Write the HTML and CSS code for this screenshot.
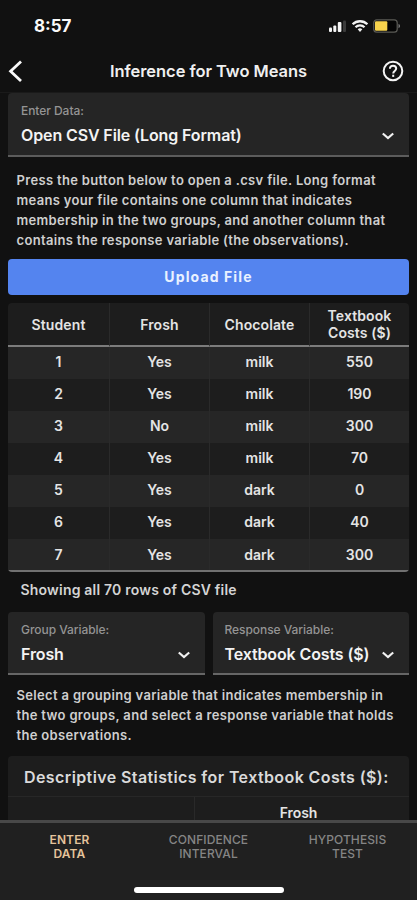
FILE: index.html
```html
<!DOCTYPE html>
<html lang="en">
<head>
<meta charset="utf-8">
<title>Inference for Two Means</title>
<link rel="stylesheet" href="styles.css">
</head>
<body>
<div class="app">
  <div class="status">
    <span class="time">8:57</span>
    <svg class="status-icons" width="74" height="18" viewBox="0 0 74 18">
      <g fill="#f4f4f4">
        <rect x="1" y="10.5" width="3" height="4.5" rx="1"/>
        <rect x="5.3" y="8.5" width="3" height="6.5" rx="1"/>
        <rect x="9.8" y="5" width="3.6" height="10" rx="1"/>
        <rect x="15" y="3.5" width="3" height="11.500" rx="1" fill="#3b3b3b"/>
      </g>
      <g fill="none" stroke="#f4f4f4" stroke-width="2.3">
        <path d="M24.600 7.300a10.500 10.500 0 0 1 14.800 0"/>
        <path d="M27.500 10.300a6.400 6.400 0 0 1 9 0"/>
      </g>
      <path d="M29.700 12.200a3.400 3.400 0 0 1 4.600 0L32 14.900z" fill="#f4f4f4"/>
      <rect x="45.800" y="2.800" width="23.400" height="12.400" rx="3" fill="#050505" stroke="#5c5c57" stroke-width="1.200"/>
      <rect x="47" y="4.300" width="12.300" height="9.500" rx="1" fill="#f8d34c"/>
      <path d="M70.500 7c2 .7 2 3.500 0 4.200z" fill="#777"/>
    </svg>
  </div>
  <header class="header">
    <svg width="24" height="24" viewBox="0 0 24 24"><path d="M14 2.500 3.600 12.200 14 22" fill="none" stroke="#fafafa" stroke-width="2.800"/></svg>
    <h1>Inference for Two Means</h1>
    <svg width="24" height="24" viewBox="0 0 24 24" fill="none" stroke="#f4f4f4" stroke-width="2"><circle cx="12" cy="12" r="9.300"/><path d="M8.900 9.800C8.900 7.900 10.200 6.700 12 6.700s3.200 1.200 3.200 2.900c0 2.300-3 2.400-3 4.800"/><path d="M12.200 15.700v2.200"/></svg>
  </header>
  <main>
    <div class="select wide">
      <div class="label">Enter Data:</div>
      <div class="value"><span>Open CSV File (Long Format)</span><svg width="14" height="10" viewBox="0 0 14 10"><path d="m1.800 2.500 5.200 4.500 5.200-4.500"/></svg></div>
    </div>
    <p class="help first">Press the button below to open a .csv file. Long format<br>means your file contains one column that indicates<br>membership in the two groups, and another column that<br>contains the response variable (the observations).</p>
    <button class="upload">Upload File</button>
    <table class="data">
      <thead><tr><th>Student</th><th>Frosh</th><th>Chocolate</th><th>Textbook<br>Costs ($)</th></tr></thead>
      <tbody>
        <tr><td>1</td><td>Yes</td><td>milk</td><td>550</td></tr>
        <tr><td>2</td><td>Yes</td><td>milk</td><td>190</td></tr>
        <tr><td>3</td><td>No</td><td>milk</td><td>300</td></tr>
        <tr><td>4</td><td>Yes</td><td>milk</td><td>70</td></tr>
        <tr><td>5</td><td>Yes</td><td>dark</td><td>0</td></tr>
        <tr><td>6</td><td>Yes</td><td>dark</td><td>40</td></tr>
        <tr><td>7</td><td>Yes</td><td>dark</td><td>300</td></tr>
      </tbody>
    </table>
    <div class="caption">Showing all 70 rows of CSV file</div>
    <div class="pair">
      <div class="select">
        <div class="label">Group Variable:</div>
        <div class="value"><span>Frosh</span><svg width="14" height="10" viewBox="0 0 14 10"><path d="m1.800 2.500 5.200 4.500 5.200-4.500"/></svg></div>
      </div>
      <div class="select">
        <div class="label">Response Variable:</div>
        <div class="value"><span>Textbook Costs ($)</span><svg width="14" height="10" viewBox="0 0 14 10"><path d="m1.800 2.500 5.200 4.500 5.200-4.500"/></svg></div>
      </div>
    </div>
    <p class="help second">Select a grouping variable that indicates membership in<br>the two groups, and select a response variable that holds<br>the observations.</p>
    <section class="stats">
      <h2>Descriptive Statistics for Textbook Costs ($):</h2>
      <div class="stats-row"><div></div><div>Frosh</div></div>
    </section>
  </main>
  <nav class="tabs">
    <div class="tab-row">
      <a class="active">ENTER<br>DATA</a>
      <a>CONFIDENCE<br>INTERVAL</a>
      <a>HYPOTHESIS<br>TEST</a>
    </div>
    <div class="home"></div>
  </nav>
</div>
</body>
</html>
```
FILE: styles.css
```css
* { box-sizing: border-box; }
body { margin: 0; background: #111; font-family: Inter, "Liberation Sans", sans-serif; color: #e4e4e4; }
.app { width: 417px; height: 900px; display: flex; flex-direction: column; overflow: hidden; }
.status { height: 50px; flex: none; display: flex; justify-content: space-between; align-items: center; padding: 2px 15px 0 34px; }
.time { font-size: 17px; font-weight: 700; color: #fafafa; letter-spacing: 0; }
.header { height: 43px; flex: none; display: flex; align-items: center; justify-content: space-between; padding: 0 12px 0 7px; border-bottom: 1px solid #1a1a1a; }
.header h1 { margin: 0 0 0 5px; font-size: 16.500px; font-weight: 600; color: #f0f0f0; letter-spacing: -.05px; }
main { flex: 1; min-height: 0; overflow: hidden; padding: 0 8px; display: flex; flex-direction: column; }
main > * { flex: none; }
.select { height: 63px; background: #252525; border-bottom: 2px solid #666; border-radius: 4px 4px 0 0; padding: 10px 14px 0 13px; }
.pair .select + .select { padding-left: 12px; }
.wide { height: 64px; border-color: #5c5c5c; }
.label { font-size: 12px; line-height: 16px; color: #949494; letter-spacing: -.05px; font-weight: 500; }
.value { display: flex; align-items: center; justify-content: space-between; margin-top: 4px; font-size: 16px; line-height: 24px; font-weight: 600; letter-spacing: -.12px; color: #f3f3f3; white-space: nowrap; }
.value svg { fill: none; stroke: #f1f1f1; stroke-width: 2.200; position: relative; top: 1px; }
.help { margin: 0; padding-left: 8.500px; font-size: 13px; line-height: 20px; font-weight: 600; letter-spacing: .33px; color: #cfcfcf; white-space: nowrap; }
.first { margin-top: 13px; }
.upload { margin: 9px 0 8px; height: 36px; border: 0; border-radius: 4px; background: #5484ef; color: #e9f1ff; font-family: inherit; font-size: 14px; font-weight: 700; letter-spacing: 1.120px; padding: 0; line-height: 36px; }
.data { width: 401px; table-layout: fixed; border-collapse: separate; border-spacing: 0; text-align: center; background: #1d1d1d; border-radius: 4px; border-bottom: 2px solid #717171; }
.data th, .data td { padding: 0; border-left: 1px solid #2a2a2a; }
.data th:first-child, .data td:first-child { border-left: 0; }
.data th { height: 44px; border-bottom: 2px solid #7c7c7c; font-size: 14px; font-weight: 600; line-height: 17px; letter-spacing: .1px; }
.data td { height: 32px; padding-bottom: 2px; font-size: 14px; font-weight: 600; line-height: 18px; }
.data th:first-child, .data td:first-child { width: 101px; }
.data tbody tr:last-child td { height: 31px; padding-bottom: 0; }
.data tbody tr:nth-child(odd) { background: #262626; }
.caption { height: 40px; line-height: 36px; padding-left: 12.500px; font-size: 14px; font-weight: 600; color: #d4d4d4; letter-spacing: .2px; }
.pair { display: grid; grid-template-columns: 1fr 1fr; gap: 8px; }
.second { margin-top: 10px; }
.stats { margin-top: 11px; height: 80px; background: #1d1d1d; border-radius: 4px 4px 0 0; }
.stats h2 { margin: 0; padding-left: 16px; height: 41px; line-height: 42px; font-size: 16px; font-weight: 600; letter-spacing: .4px; color: #dadada; white-space: nowrap; border-bottom: 1px solid #272727; }
.stats-row { display: grid; grid-template-columns: 186px 1fr; text-align: center; font-size: 14px; font-weight: 600; letter-spacing: -.1px; }
.stats-row div { height: 23px; line-height: 31px; }
.stats-row div + div { border-left: 1px solid #292929; padding-right: 7px; }
.tabs { height: 80px; flex: none; background: #202020; border-top: 3px solid #484848; }
.tab-row { display: grid; grid-template-columns: repeat(3, 1fr); padding-top: 10px; height: 64px; text-align: center; font-size: 12px; line-height: 14.300px; letter-spacing: .1px; color: #858585; font-weight: 500; }
.tab-row .active { color: #e5c49b; font-weight: 600; }
.home { width: 150px; height: 6px; margin: 0 auto; border-radius: 3px; background: #fff; }
```
